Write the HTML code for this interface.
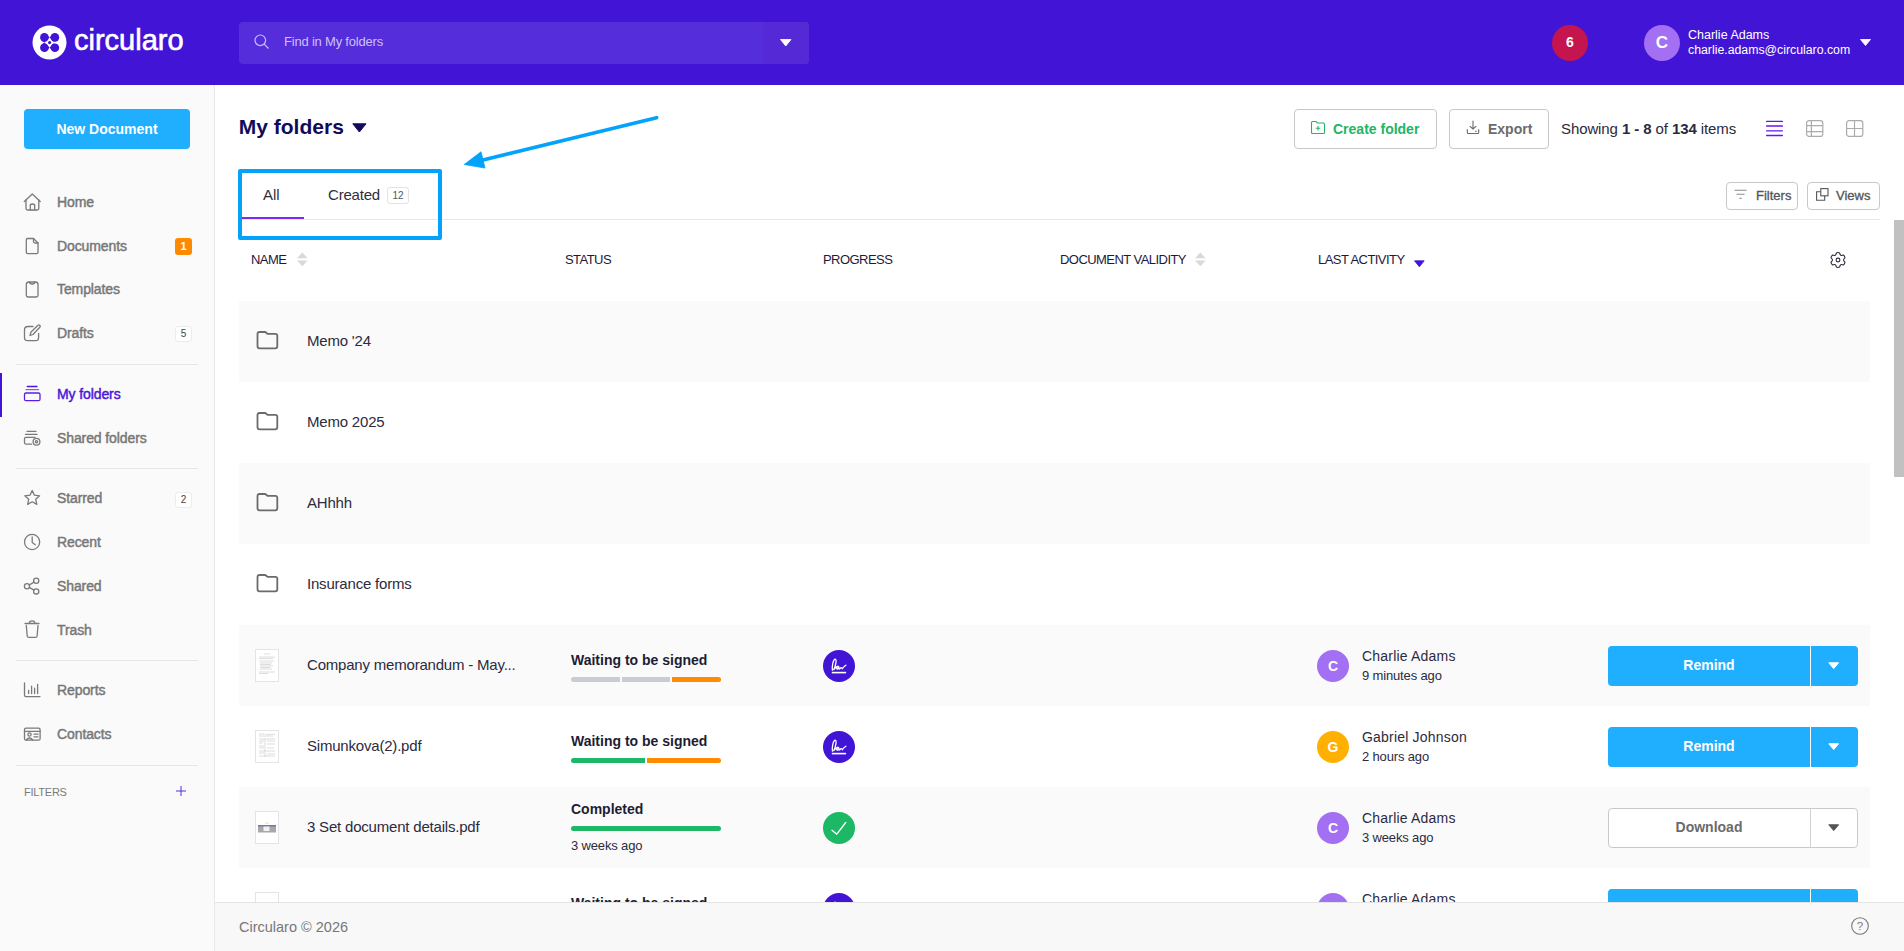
<!DOCTYPE html>
<html><head><meta charset="utf-8">
<style>
*{box-sizing:border-box;margin:0;padding:0}
html,body{width:1904px;height:951px;overflow:hidden;background:#fff;font-family:"Liberation Sans",sans-serif;position:relative}
.a{position:absolute;white-space:nowrap}
svg{position:absolute;overflow:visible}
#hdr{position:absolute;left:0;top:0;width:1904px;height:85px;background:#4214d6}
#side{position:absolute;left:0;top:85px;width:215px;height:866px;background:#fafafa;border-right:1px solid #e8e8e8}
.nav{font-size:14px;line-height:14px;color:#777;font-weight:normal;letter-spacing:-0.1px;-webkit-text-stroke:0.45px currentColor}
.div{position:absolute;left:16px;width:182px;height:1px;background:#e6e6e6}
.th{font-size:13px;line-height:13px;color:#1c1a3c;letter-spacing:-0.55px}
.row{position:absolute;left:239px;width:1631px;height:81px}
.g{background:#fafafa}
.nm{font-size:15px;line-height:15px;color:#2c2b40;letter-spacing:-0.2px}
.st{font-size:14px;line-height:14px;color:#1e1d33;font-weight:bold}
.pn{font-size:14px;line-height:14px;color:#2c2b40;letter-spacing:0.2px}
.tm{font-size:13px;line-height:13px;color:#2c2b40;letter-spacing:-0.15px}
.av{position:absolute;width:32px;height:32px;border-radius:50%;color:#fff;font-weight:bold;font-size:14px;line-height:32px;text-align:center}
.btn{position:absolute;left:1369px;width:250px;height:40px;border-radius:4px;background:#20aefe}
.btn .t{position:absolute;left:0;top:0;width:202px;height:40px;line-height:38px;text-align:center;color:#fff;font-weight:bold;font-size:14px}
.btn .sep{position:absolute;left:202px;top:0;width:1px;height:40px;background:#fff}
.btn.w{background:#fff;border:1px solid #c9c9c9}
.btn.w .t{color:#6b6b6b;top:-1px;left:-1px}
.btn.w .sep{background:#d0d0d0;top:-1px;left:201px}
.thumb{position:absolute;left:16px;width:24px;height:33px;background:#fff;border:1px solid #e4e4e4}
.btn .cr path{fill:#fff;stroke:#fff}.btn.w .cr path{fill:#555;stroke:#555}.btn.w .cr{left:219px!important;top:15px!important}
.bar{position:absolute;left:332px;height:5px;border-radius:3px}
</style></head><body>

<!-- HEADER -->
<div id="hdr">
  <svg style="left:32px;top:25px" width="35" height="35" viewBox="0 0 35 35">
    <circle cx="17.5" cy="17.5" r="17" fill="#fff"/>
    <g fill="#4214d6">
      <circle cx="12.4" cy="12.4" r="4.3"/><polygon points="9.4,15.4 12.4,8.3 17.6,12.3 12.4,17.6"/>
      <circle cx="22.9" cy="12.4" r="4.3"/><polygon points="17.6,12.3 22.9,8.1 26.3,15.6 21.2,16.6"/>
      <circle cx="12.4" cy="22.7" r="4.3"/><polygon points="12.4,17.6 17.6,22.8 12.4,27 8.6,20.5"/>
      <circle cx="22.9" cy="22.7" r="4.3"/><polygon points="17.6,22.8 21.2,18.6 26.3,20 22.9,27"/>
    </g>
    <circle cx="17.6" cy="17.6" r="1.6" fill="#4214d6"/>
  </svg>

  <div class="a" style="left:74px;top:25.5px;font-size:29px;line-height:29px;color:#fff;-webkit-text-stroke:0.6px #fff">circularo</div>
  <div style="position:absolute;left:239px;top:22px;width:570px;height:42px;border-radius:4px;background:#562ddb"></div>
  <div style="position:absolute;left:763px;top:22px;width:46px;height:42px;border-radius:0 4px 4px 0;background:#552ad6"></div>
  <div class="a" style="left:284px;top:34.8px;font-size:13px;line-height:13px;color:#cdc2f4;letter-spacing:-0.2px">Find in My folders</div>
  <svg style="left:254px;top:34px" width="16" height="16" viewBox="0 0 16 16"><circle cx="6.3" cy="6.3" r="5.3" fill="none" stroke="#c9bdf3" stroke-width="1.2"/><line x1="10.2" y1="10.2" x2="14.5" y2="14.5" stroke="#c9bdf3" stroke-width="1.2"/></svg>
  <svg style="left:780px;top:39px" width="12" height="8" viewBox="0 0 12 8"><path d="M0.5 0.5 H11 L5.75 7 Z" fill="#fff" stroke="#fff" stroke-width="0.8" stroke-linejoin="round"/></svg>
  <svg style="left:1860px;top:39px" width="11" height="7" viewBox="0 0 11 7"><path d="M0.5 0.5 H10.5 L5.5 6.5 Z" fill="#fff" stroke="#fff" stroke-width="0.8" stroke-linejoin="round"/></svg>
  <div style="position:absolute;left:1552px;top:25px;width:36px;height:36px;border-radius:50%;background:#c5154e;color:#fff;font-weight:bold;font-size:14px;line-height:35px;text-align:center">6</div>
  <div style="position:absolute;left:1644px;top:25px;width:36px;height:36px;border-radius:50%;background:#a370f3;color:#fff;font-weight:bold;font-size:17px;line-height:36px;text-align:center">C</div>
  <div class="a" style="left:1688px;top:29.2px;font-size:12.5px;line-height:12.5px;color:#fff">Charlie Adams</div>
  <div class="a" style="left:1688px;top:43.9px;font-size:12.3px;line-height:12.5px;color:#fff">charlie.adams@circularo.com</div>
</div>

<!-- SIDEBAR -->
<div id="side"></div>
<div style="position:absolute;left:24px;top:109px;width:166px;height:40px;border-radius:4px;background:#20aefe;color:#fff;font-weight:bold;font-size:14px;line-height:40px;text-align:center">New Document</div>

<div class="a nav" style="left:57px;top:195px">Home</div>
<div class="a nav" style="left:57px;top:239px">Documents</div>
<div class="a nav" style="left:57px;top:282px">Templates</div>
<div class="a nav" style="left:57px;top:326px">Drafts</div>
<div class="div" style="top:364px"></div>
<div style="position:absolute;left:0;top:373px;width:2px;height:44px;background:#4214d6"></div>
<div class="a nav" style="left:57px;top:387px;color:#4a18d8">My folders</div>
<div class="a nav" style="left:57px;top:431px">Shared folders</div>
<div class="div" style="top:468px"></div>
<div class="a nav" style="left:57px;top:491px">Starred</div>
<div class="a nav" style="left:57px;top:535px">Recent</div>
<div class="a nav" style="left:57px;top:579px">Shared</div>
<div class="a nav" style="left:57px;top:623px">Trash</div>
<div class="div" style="top:660px"></div>
<div class="a nav" style="left:57px;top:683px">Reports</div>
<div class="a nav" style="left:57px;top:727px">Contacts</div>
<div class="div" style="top:765px"></div>
<div class="a" style="left:24px;top:786.5px;font-size:11px;line-height:11px;color:#7a7a7a;letter-spacing:-0.25px">FILTERS</div>

<div style="position:absolute;left:175px;top:238px;width:17px;height:17px;border-radius:3px;background:#ff8a00;color:#fff;font-size:11px;line-height:17px;text-align:center;font-weight:bold">1</div>
<div style="position:absolute;left:175px;top:326px;width:17px;height:16px;border-radius:3px;background:#fff;border:1px solid #ececec;color:#444;font-size:10px;line-height:14px;text-align:center">5</div>
<div style="position:absolute;left:175px;top:491.5px;width:17px;height:16px;border-radius:3px;background:#fff;border:1px solid #ececec;color:#444;font-size:10px;line-height:14px;text-align:center">2</div>


<!-- sidebar icons -->
<svg style="left:0;top:0" width="60" height="760" viewBox="0 0 60 760" fill="none" stroke="#7a7a7a" stroke-width="1.3" stroke-linejoin="round" stroke-linecap="round">
  <path d="M24.3 201.5 L32.3 194 L40.2 201.5"/><path d="M26 200 V208.5 Q26 210 27.5 210 H37.3 Q38.8 210 38.8 208.5 V200"/><path d="M30.3 210 V205.5 Q30.3 204 32.5 204 Q34.7 204 34.7 205.5 V210"/>
  <path d="M27.7 238.5 H33.5 L38 243 V252.3 Q38 253.7 36.6 253.7 H27.7 Q26.3 253.7 26.3 252.3 V239.9 Q26.3 238.5 27.7 238.5 Z"/><path d="M33.5 238.5 V241.5 Q33.5 243 35 243 H38"/>
  <path d="M29 282 H35.5 Q38 282 38 284.5 V295.3 Q38 297 36.3 297 H28 Q26.3 297 26.3 295.3 V284.5 Q26.3 282 29 282 Z"/><path d="M29.5 282 Q29.5 284 32.2 284 Q34.8 284 34.8 282"/>
  <path d="M33 326.5 H28 Q24.5 326.5 24.5 330 V337.5 Q24.5 340.7 27.7 340.7 H35.5 Q38.6 340.7 38.6 337.5 V333.5"/><path d="M30 335.5 L31 332 L38 325.2 Q39.2 324.5 40 325.5 Q40.7 326.5 39.8 327.3 L33 334.5 Z"/>
  <path d="M24.5 394.5 Q24.5 393 26 393 H38.5 Q40 393 40 394.5 V399.2 Q40 400.7 38.5 400.7 H26 Q24.5 400.7 24.5 399.2 Z" stroke="#5b1fe2"/><path d="M26 389.6 H38.6" stroke="#8a5cf0"/><path d="M27.3 386.5 H37" stroke="#4a14dc"/>
  <path d="M35 437.3 H26 Q24.5 437.3 24.5 438.8 V442.7 Q24.5 444.2 26 444.2 H31.5"/><path d="M25.5 434.4 H37"/><path d="M27 431.3 H36"/><circle cx="36.5" cy="441.7" r="3.4"/><circle cx="36.5" cy="441.7" r="1.1"/>
  <path d="M32.2 490.5 L34.4 495.2 L39.6 495.8 L35.7 499.3 L36.8 504.4 L32.2 501.8 L27.6 504.4 L28.7 499.3 L24.8 495.8 L30 495.2 Z"/>
  <circle cx="32.1" cy="542" r="7.6"/><path d="M32.2 537 V542.5 L35.3 544.8"/>
  <circle cx="27" cy="586.2" r="2.6"/><circle cx="36.2" cy="580.8" r="2.6"/><circle cx="36.2" cy="591.4" r="2.6"/><path d="M29.3 585 L33.9 582.1 M29.3 587.4 L33.9 590.1"/>
  <path d="M25 623.5 H39"/><path d="M29.3 623.3 Q29.3 620.8 32.1 620.8 Q34.9 620.8 34.9 623.3"/><path d="M26.3 625.5 L27.2 636 Q27.4 637.4 28.8 637.4 H35.5 Q36.9 637.4 37.1 636 L38 625.5"/>
  <path d="M24.5 683 V695 Q24.5 696.6 26 696.6 H40"/><path d="M28.6 690.3 V693.5 M31.6 686.2 V693.5 M34.6 688.2 V693.5 M37.6 684.3 V693.5"/>
  <rect x="24.5" y="728.2" width="15.6" height="12" rx="1.5"/><path d="M24.5 731.3 H40"/><circle cx="29.5" cy="734.5" r="1.6"/><path d="M26.3 740 Q29.5 736 32.7 740"/><path d="M34 734.2 H38 M34 736.8 H38"/>
</svg>
<svg style="left:175.5px;top:786.3px" width="10" height="10" viewBox="0 0 10 10" fill="none" stroke="#4a18d8" stroke-width="0.9"><path d="M5 0 V10 M0 5 H10"/></svg>

<!-- main header icons -->
<svg style="left:352px;top:123px" width="15" height="10" viewBox="0 0 15 10"><path d="M0.8 0.8 H14 L7.4 9 Z" fill="#100b5a" stroke="#100b5a" stroke-width="1" stroke-linejoin="round"/></svg>
<svg style="left:1310px;top:120px" width="16" height="15" viewBox="0 0 16 15" fill="none" stroke="#22b565" stroke-width="1.1"><path d="M1.5 2.5 Q1.5 1.5 2.5 1.5 H6 L7.5 3 H13.5 Q14.5 3 14.5 4 V12.5 Q14.5 13.5 13.5 13.5 H2.5 Q1.5 13.5 1.5 12.5 Z"/><path d="M8 6 V10.5 M5.8 8.2 H10.2"/></svg>
<svg style="left:1466px;top:120px" width="14" height="15" viewBox="0 0 14 15" fill="none" stroke="#6b6b6b" stroke-width="1.1" stroke-linecap="round"><path d="M7 1 V9 M4 6.3 L7 9 L10 6.3"/><path d="M1.3 9.5 V12.5 Q1.3 13.5 2.3 13.5 H11.7 Q12.7 13.5 12.7 12.5 V9.5"/><path d="M9.5 11.2 H10.3"/></svg>
<svg style="left:1766px;top:121px" width="17" height="16" viewBox="0 0 17 16" fill="none" stroke="#6a12f2" stroke-width="1.3" stroke-linecap="round"><path d="M0.6 0.4 H16.4 M0.6 5 H16.4 M0.6 9.8 H16.4 M0.6 14.5 H16.4"/></svg>
<svg style="left:1806px;top:120px" width="18" height="17" viewBox="0 0 18 17" fill="none" stroke="#ababab" stroke-width="1.2"><rect x="0.6" y="0.6" width="16.2" height="15.8" rx="2.5"/><path d="M5.4 0.6 V16.4 M0.6 5.6 H16.8 M0.6 11.6 H16.8"/></svg>
<svg style="left:1846px;top:120px" width="18" height="17" viewBox="0 0 18 17" fill="none" stroke="#ababab" stroke-width="1.2"><rect x="0.6" y="0.6" width="16.2" height="15.8" rx="2.5"/><path d="M8.5 0.6 V16.4 M0.6 8.5 H16.8"/></svg>
<svg style="left:1734px;top:189px" width="14" height="12" viewBox="0 0 14 12" fill="none" stroke="#8a8a8a" stroke-width="1.1"><path d="M0.5 1.3 H12.6 M2.5 5.2 H10.6 M5.3 9.3 H7.8"/></svg>
<svg style="left:1816px;top:188px" width="14" height="14" viewBox="0 0 14 14" fill="none" stroke="#555" stroke-width="1.1"><rect x="4.8" y="0.6" width="7.2" height="7.2"/><path d="M4.8 3.7 H0.6 V12.3 H8.7 V7.8"/></svg>

<!-- table header icons -->
<svg style="left:297px;top:252px" width="11" height="15" viewBox="0 0 11 15" fill="#d9d9d9"><path d="M5.3 0.5 L10.6 6.3 H0 Z M0 8.4 H10.6 L5.3 14.3 Z"/></svg>
<svg style="left:1195px;top:252px" width="11" height="15" viewBox="0 0 11 15" fill="#d9d9d9"><path d="M5.3 0.5 L10.6 6.3 H0 Z M0 8.4 H10.6 L5.3 14.3 Z"/></svg>
<svg style="left:1414px;top:260px" width="11" height="8" viewBox="0 0 11 8"><path d="M0.5 0.8 H10.2 L5.4 6.8 Z" fill="#4214d6" stroke="#4214d6" stroke-width="0.8" stroke-linejoin="round"/></svg>
<svg style="left:1830px;top:252px" width="16" height="16" viewBox="0 0 16 16" fill="none" stroke="#2c2b40" stroke-width="1.1"><path id="gear" d="M6.36 0.89 Q8.00 0.10 9.64 0.89 Q10.05 4.45 13.34 3.02 Q14.84 4.05 14.98 5.87 Q12.10 8.00 14.98 10.13 Q14.84 11.95 13.34 12.98 Q10.05 11.55 9.64 15.11 Q8.00 15.90 6.36 15.11 Q5.95 11.55 2.66 12.98 Q1.16 11.95 1.02 10.13 Q3.90 8.00 1.02 5.87 Q1.16 4.05 2.66 3.02 Q5.95 4.45 6.36 0.89 Z"/><circle cx="8" cy="8" r="1.9"/></svg>

<!-- MAIN HEADER -->
<div class="a" style="left:238.8px;top:116px;font-size:21px;line-height:21px;color:#100b5a;font-weight:bold">My folders</div>

<div style="position:absolute;left:1294px;top:109px;width:143px;height:40px;border:1px solid #c8c8c8;border-radius:4px"></div>
<div class="a" style="left:1333px;top:122.2px;font-size:14px;line-height:14px;color:#22b565;font-weight:bold">Create folder</div>
<div style="position:absolute;left:1449px;top:109px;width:100px;height:40px;border:1px solid #c8c8c8;border-radius:4px"></div>
<div class="a" style="left:1488px;top:122.2px;font-size:14px;line-height:14px;color:#6b6b6b;font-weight:bold">Export</div>
<div class="a" style="left:1561px;top:121.3px;font-size:15px;line-height:15px;color:#2b2a3d;letter-spacing:-0.1px">Showing <b>1 - 8</b> of <b>134</b> items</div>

<!-- tabs -->
<div class="a" style="left:263px;top:186.7px;font-size:15px;line-height:15px;color:#2f2f3a">All</div>
<div class="a" style="left:328px;top:186.7px;font-size:15px;line-height:15px;color:#2f2f3a;letter-spacing:-0.2px">Created</div>
<div style="position:absolute;left:387px;top:187px;width:22px;height:17px;border:1px solid #e3e3e3;border-radius:3px;font-size:10px;line-height:15px;text-align:center;color:#555">12</div>
<div style="position:absolute;left:239px;top:219px;width:1641px;height:1px;background:#e6e6e6"></div>
<div style="position:absolute;left:242px;top:217px;width:62px;height:2px;background:#7a2cf5"></div>

<div style="position:absolute;left:1726px;top:182px;width:72px;height:28px;border:1px solid #c8c8c8;border-radius:4px"></div>
<div class="a" style="left:1756px;top:188.6px;font-size:13px;line-height:13px;color:#555;-webkit-text-stroke:0.3px #555">Filters</div>
<div style="position:absolute;left:1807px;top:182px;width:73px;height:28px;border:1px solid #c8c8c8;border-radius:4px"></div>
<div class="a" style="left:1836px;top:188.6px;font-size:13px;line-height:13px;color:#555;-webkit-text-stroke:0.3px #555">Views</div>

<!-- table header -->
<div class="a th" style="left:251px;top:253px">NAME</div>
<div class="a th" style="left:565px;top:253px">STATUS</div>
<div class="a th" style="left:823px;top:253px">PROGRESS</div>
<div class="a th" style="left:1060px;top:253px">DOCUMENT VALIDITY</div>
<div class="a th" style="left:1318px;top:253px">LAST ACTIVITY</div>

<!-- ROWS -->
<div class="row g" style="top:301px"><svg style="left:16.5px;top:29px" width="24" height="20" viewBox="0 0 24 20" fill="none" stroke="#6b6b6b" stroke-width="1.8" stroke-linejoin="round"><path d="M1.5 4 Q1.5 2 3.5 2 H9.3 L11.5 3.8 H19.3 Q21.3 3.8 21.3 5.8 V16.3 Q21.3 18.3 19.3 18.3 H3.5 Q1.5 18.3 1.5 16.3 Z"/></svg><div class="a nm" style="left:68px;top:32px">Memo '24</div></div>
<div class="row" style="top:382px"><svg style="left:16.5px;top:29px" width="24" height="20" viewBox="0 0 24 20" fill="none" stroke="#6b6b6b" stroke-width="1.8" stroke-linejoin="round"><path d="M1.5 4 Q1.5 2 3.5 2 H9.3 L11.5 3.8 H19.3 Q21.3 3.8 21.3 5.8 V16.3 Q21.3 18.3 19.3 18.3 H3.5 Q1.5 18.3 1.5 16.3 Z"/></svg><div class="a nm" style="left:68px;top:32px">Memo 2025</div></div>
<div class="row g" style="top:463px"><svg style="left:16.5px;top:29px" width="24" height="20" viewBox="0 0 24 20" fill="none" stroke="#6b6b6b" stroke-width="1.8" stroke-linejoin="round"><path d="M1.5 4 Q1.5 2 3.5 2 H9.3 L11.5 3.8 H19.3 Q21.3 3.8 21.3 5.8 V16.3 Q21.3 18.3 19.3 18.3 H3.5 Q1.5 18.3 1.5 16.3 Z"/></svg><div class="a nm" style="left:68px;top:32px">AHhhh</div></div>
<div class="row" style="top:544px"><svg style="left:16.5px;top:29px" width="24" height="20" viewBox="0 0 24 20" fill="none" stroke="#6b6b6b" stroke-width="1.8" stroke-linejoin="round"><path d="M1.5 4 Q1.5 2 3.5 2 H9.3 L11.5 3.8 H19.3 Q21.3 3.8 21.3 5.8 V16.3 Q21.3 18.3 19.3 18.3 H3.5 Q1.5 18.3 1.5 16.3 Z"/></svg><div class="a nm" style="left:68px;top:32px">Insurance forms</div></div>

<div class="row g" style="top:625px">
  <div class="thumb" style="top:24px"><svg style="left:0;top:0" width="22" height="31" viewBox="0 0 22 31" stroke="#b5b5b5" stroke-width="0.45"><path d="M8 4 H14 M3 7 H19 M3 8.5 H17 M3 11 H18 M4 13 H16 M4 14.5 H15 M4 16 H17 M4 17.5 H14 M4 19 H16 M3 22 H19 M3 23.5 H12"/></svg></div>
  <div class="a nm" style="left:68px;top:32px">Company memorandum - May...</div>
  <div class="a st" style="left:332px;top:28.3px">Waiting to be signed</div>
  <div class="bar" style="top:52px;width:49px;background:#c9ccd1;border-radius:3px 0 0 3px"></div><div class="bar" style="left:383px;top:52px;width:48px;background:#c9ccd1;border-radius:0"></div><div class="bar" style="left:433px;top:52px;width:49px;background:#ff8c00;border-radius:0 3px 3px 0"></div>
  <div class="av" style="left:584px;top:25px;background:#4214d6"><svg style="left:0;top:0" width="32" height="32" viewBox="0 0 32 32" fill="none" stroke="#fff" stroke-width="1.3" stroke-linecap="round" stroke-linejoin="round"><path d="M9.4 20.2 C8.8 16.5 10.2 9.2 12.2 9.2 C14 9.2 12.8 15.5 10.8 19.6 C12.5 18.5 13.5 15.8 15.2 16.3 C16.8 16.8 15.5 19.8 14 19 C12.8 18.2 15 16.5 16.8 19 C17.6 17.5 18.5 16.8 19.3 18.8 C20 17.5 21 16.3 22.9 15.2"/><path d="M8.8 22.6 H23.1" stroke-width="1.6" stroke-linecap="butt"/></svg></div>
  <div class="av" style="left:1078px;top:25px;background:#a370f3">C</div>
  <div class="a pn" style="left:1123px;top:23.9px">Charlie Adams</div>
  <div class="a tm" style="left:1123px;top:44px">9 minutes ago</div>
  <div class="btn" style="top:21px"><div class="t">Remind</div><div class="sep"></div><svg class="cr" style="left:220px;top:16px" width="12" height="8" viewBox="0 0 12 8"><path d="M0.8 0.8 H10.6 L5.7 6.6 Z" stroke-width="1" stroke-linejoin="round"/></svg></div>
</div>
<div class="row" style="top:706px">
  <div class="thumb" style="top:24px"><svg style="left:0;top:0" width="22" height="31" viewBox="0 0 22 31" stroke="#b5b5b5" stroke-width="0.45"><path d="M3 3 H9 M10 3.5 H19 M3 5 H17 M3 8 H19 M9 8 V26 M3 10 H8 M11 10 H19 M3 12 H7 M11 13 H19 M3 15 H8 M3 17 H8 M11 17 H18 M3 20 H19 M3 22 H8 M11 23 H19 M3 25 H19"/></svg></div>
  <div class="a nm" style="left:68px;top:32px">Simunkova(2).pdf</div>
  <div class="a st" style="left:332px;top:28.3px">Waiting to be signed</div>
  <div class="bar" style="top:52px;width:74px;background:#1db866;border-radius:3px 0 0 3px"></div><div class="bar" style="left:408px;top:52px;width:74px;background:#ff8c00;border-radius:0 3px 3px 0"></div>
  <div class="av" style="left:584px;top:25px;background:#4214d6"><svg style="left:0;top:0" width="32" height="32" viewBox="0 0 32 32" fill="none" stroke="#fff" stroke-width="1.3" stroke-linecap="round" stroke-linejoin="round"><path d="M9.4 20.2 C8.8 16.5 10.2 9.2 12.2 9.2 C14 9.2 12.8 15.5 10.8 19.6 C12.5 18.5 13.5 15.8 15.2 16.3 C16.8 16.8 15.5 19.8 14 19 C12.8 18.2 15 16.5 16.8 19 C17.6 17.5 18.5 16.8 19.3 18.8 C20 17.5 21 16.3 22.9 15.2"/><path d="M8.8 22.6 H23.1" stroke-width="1.6" stroke-linecap="butt"/></svg></div>
  <div class="av" style="left:1078px;top:25px;background:#ffb000">G</div>
  <div class="a pn" style="left:1123px;top:23.9px">Gabriel Johnson</div>
  <div class="a tm" style="left:1123px;top:44px">2 hours ago</div>
  <div class="btn" style="top:21px"><div class="t">Remind</div><div class="sep"></div><svg class="cr" style="left:220px;top:16px" width="12" height="8" viewBox="0 0 12 8"><path d="M0.8 0.8 H10.6 L5.7 6.6 Z" stroke-width="1" stroke-linejoin="round"/></svg></div>
</div>
<div class="row g" style="top:787px">
  <div class="thumb" style="top:24px"><svg style="left:0;top:0" width="22" height="31" viewBox="0 0 22 31"><path d="M9 11 H13" stroke="#bbb" stroke-width="0.5"/><rect x="2" y="13.5" width="18" height="7" fill="#a8a8a8"/><rect x="2" y="13.3" width="18" height="1" fill="#5b4aa8"/><rect x="7.5" y="14.5" width="6" height="4.5" fill="#f0f0f0"/></svg></div>
  <div class="a nm" style="left:68px;top:32px">3 Set document details.pdf</div>
  <div class="a st" style="left:332px;top:15px">Completed</div>
  <div class="bar" style="top:39px;width:150px;background:#1db866"></div>
  <div class="a tm" style="left:332px;top:51.7px">3 weeks ago</div>
  <div class="av" style="left:584px;top:25px;background:#1db866"><svg style="left:0;top:0" width="32" height="32" viewBox="0 0 32 32" fill="none" stroke="#fff" stroke-width="1.3" stroke-linecap="round" stroke-linejoin="round"><path d="M9 18.2 L13.8 22.2 L22.7 10.5"/></svg></div>
  <div class="av" style="left:1078px;top:25px;background:#a370f3">C</div>
  <div class="a pn" style="left:1123px;top:23.9px">Charlie Adams</div>
  <div class="a tm" style="left:1123px;top:44px">3 weeks ago</div>
  <div class="btn w" style="top:21px"><div class="t">Download</div><div class="sep"></div><svg class="cr" style="left:220px;top:16px" width="12" height="8" viewBox="0 0 12 8"><path d="M0.8 0.8 H10.6 L5.7 6.6 Z" stroke-width="1" stroke-linejoin="round"/></svg></div>
</div>
<div class="row" style="top:868px">
  <div class="thumb" style="top:24px"></div>
  <div class="a nm" style="left:68px;top:32px">Company memorandum - Jul...</div>
  <div class="a st" style="left:332px;top:28.3px">Waiting to be signed</div>
  <div class="av" style="left:584px;top:25px;background:#4214d6"><svg style="left:0;top:0" width="32" height="32" viewBox="0 0 32 32" fill="none" stroke="#fff" stroke-width="1.3" stroke-linecap="round" stroke-linejoin="round"><path d="M9.4 20.2 C8.8 16.5 10.2 9.2 12.2 9.2 C14 9.2 12.8 15.5 10.8 19.6 C12.5 18.5 13.5 15.8 15.2 16.3 C16.8 16.8 15.5 19.8 14 19 C12.8 18.2 15 16.5 16.8 19 C17.6 17.5 18.5 16.8 19.3 18.8 C20 17.5 21 16.3 22.9 15.2"/><path d="M8.8 22.6 H23.1" stroke-width="1.6" stroke-linecap="butt"/></svg></div>
  <div class="av" style="left:1078px;top:25px;background:#a370f3">C</div>
  <div class="a pn" style="left:1123px;top:23.9px">Charlie Adams</div>
  <div class="btn" style="top:21px"><div class="t">Remind</div><div class="sep"></div><svg class="cr" style="left:220px;top:16px" width="12" height="8" viewBox="0 0 12 8"><path d="M0.8 0.8 H10.6 L5.7 6.6 Z" stroke-width="1" stroke-linejoin="round"/></svg></div>
</div>

<!-- FOOTER -->
<div style="position:absolute;left:215px;top:902px;width:1689px;height:49px;background:#f8f8f8;border-top:1px solid #e4e4e4"></div>
<div class="a" style="left:239px;top:919.6px;font-size:14.5px;line-height:14.5px;color:#777">Circularo © 2026</div>

<svg style="left:1851px;top:917px" width="18" height="18" viewBox="0 0 18 18"><circle cx="9" cy="9" r="8.3" fill="none" stroke="#777" stroke-width="1.1"/><text x="9" y="13.2" text-anchor="middle" font-family="Liberation Sans" font-size="11.5" fill="#777">?</text></svg>
<!-- annotation -->
<div style="position:absolute;left:238px;top:169px;width:204px;height:71px;border:4px solid #03a3fb;border-radius:2px"></div>

<svg style="left:0;top:0" width="700" height="200" viewBox="0 0 700 200"><line x1="656.6" y1="117.7" x2="482" y2="160.2" stroke="#03a3fb" stroke-width="3.6" stroke-linecap="round"/><polygon points="464.2,164.5 481,151.8 485,168" fill="#03a3fb" stroke="#03a3fb" stroke-width="0.8" stroke-linejoin="round"/></svg>
<!-- scrollbar -->
<div style="position:absolute;left:1894px;top:220px;width:10px;height:257px;background:#c1c1c1"></div>
</body></html>
